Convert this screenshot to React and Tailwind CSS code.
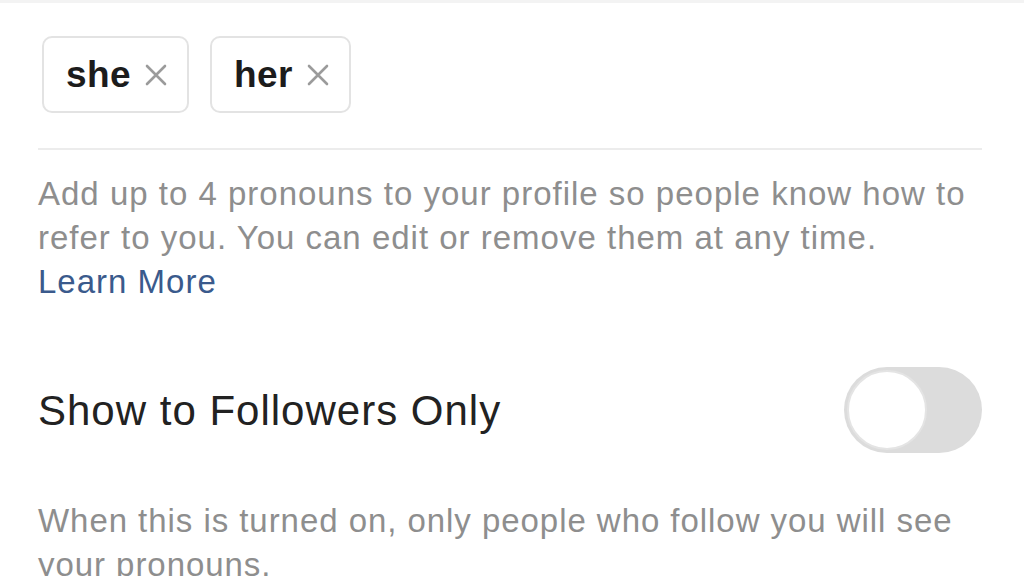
function Chip({ label }) {
  return (
    <div className="flex h-[77px] items-center gap-[14px] rounded-[10px] border-2 border-[#e3e3e3] pl-[22px] pr-[20px]">
      <span className="text-[37px] font-bold tracking-[0.4px] text-[#1c1c1c]">{label}</span>
      <svg width="22" height="22" viewBox="0 0 22 22" className="text-[#9b9b9b]">
        <path d="M2 2 L20 20 M20 2 L2 20" stroke="currentColor" strokeWidth="2.6" strokeLinecap="round" />
      </svg>
    </div>
  );
}

function Toggle() {
  return (
    <div className="flex h-[86px] w-[138px] items-center rounded-full bg-[#dcdcdc] p-[3px]">
      <div className="h-[80px] w-[80px] rounded-full border-2 border-[#e4e4e4] bg-white" />
    </div>
  );
}

export default function App() {
  return (
    <div className="h-[576px] w-[1024px] overflow-hidden bg-white font-['Liberation_Sans',Arial,sans-serif]">
      <div className="h-[3px] bg-[#f3f3f3]" />
      <div className="pl-[38px] pr-[42px]">
        <div className="flex gap-[21px] pl-[4px] pt-[33px]">
          <Chip label="she" />
          <Chip label="her" />
        </div>
        <div className="mt-[35px] h-[2px] bg-[#ececec]" />
        <p className="mt-[22px] text-[33px] leading-[44px] tracking-[1px] text-[#8e8e8e]">
          Add up to 4 pronouns to your profile so people know how to refer to you. You can edit or remove them at any time.
          <br />
          <a className="text-[#3a5a8c]">Learn More</a>
        </p>
        <div className="mt-[63px] flex items-center justify-between">
          <span className="pt-[2px] text-[42px] leading-none tracking-[1px] text-[#222222]">Show to Followers Only</span>
          <Toggle />
        </div>
        <p className="mt-[46px] text-[33px] leading-[44px] tracking-[0.95px] text-[#8e8e8e]">
          When this is turned on, only people who follow you will see your pronouns.
        </p>
      </div>
    </div>
  );
}
